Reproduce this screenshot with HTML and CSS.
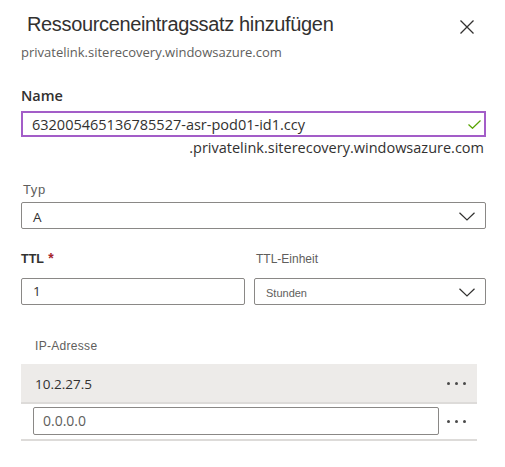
FILE: index.html
```html
<!DOCTYPE html>
<html lang="de">
<head>
<meta charset="utf-8">
<title>Ressourceneintragssatz hinzufügen</title>
<link rel="stylesheet" href="styles.css">
</head>
<body>
<div class="panel">
  <header class="head">
    <h1 class="title">Ressourceneintragssatz hinzufügen</h1>
    <button class="close" aria-label="Schließen">
      <svg width="14" height="14" viewBox="0 0 14 14"><path d="M0.5 0.5 L13.5 13.5 M13.5 0.5 L0.5 13.5" stroke="#323130" stroke-width="1.3" fill="none"/></svg>
    </button>
  </header>
  <div class="sub">privatelink.siterecovery.windowsazure.com</div>

  <div class="name-label">Name</div>
  <div class="name-input">
    <span class="name-value">632005465136785527-asr-pod01-id1.ccy</span>
    <svg class="check" width="13" height="9" viewBox="0 0 13 9"><path d="M0.5 4.5 L4.5 8.3 L12.5 0.5" stroke="#57a300" stroke-width="1.2" fill="none"/></svg>
  </div>
  <div class="suffix">.privatelink.siterecovery.windowsazure.com</div>

  <div class="light-label typ-label">Typ</div>
  <div class="select">
    <span class="select-value">A</span>
    <svg class="chev" width="16" height="9" viewBox="0 0 16 9"><path d="M0.5 0.8 L8 8 L15.5 0.8" stroke="#323130" stroke-width="1.2" fill="none"/></svg>
  </div>

  <div class="ttl-grid">
    <div class="ttl-label">TTL <span class="req">*</span></div>
    <div class="light-label unit-label">TTL-Einheit</div>
    <div class="ttl-input">1</div>
    <div class="select unit-select">
      <span class="unit-value">Stunden</span>
      <svg class="chev" width="16" height="9" viewBox="0 0 16 9"><path d="M0.5 0.8 L8 8 L15.5 0.8" stroke="#323130" stroke-width="1.2" fill="none"/></svg>
    </div>
  </div>

  <div class="ip-table">
    <div class="ip-head">IP-Adresse</div>
    <div class="ip-row filled">
      <span class="ip-value">10.2.27.5</span>
      <span class="more"><i></i><i></i><i></i></span>
    </div>
    <div class="ip-row edit">
      <div class="ip-input">0.0.0.0</div>
      <span class="more"><i></i><i></i><i></i></span>
    </div>
  </div>
</div>
</body>
</html>
```

FILE: styles.css
```css
* { box-sizing: border-box; }

body {
  margin: 0;
  background: #ffffff;
  font-family: "Open Sans", "Noto Sans", sans-serif;
  color: #323130;
}

.panel {
  width: 465px;
  margin-left: 21px;
}

.head {
  display: flex;
  justify-content: space-between;
  align-items: flex-start;
  padding-top: 13px;
}

.title {
  margin: 0 0 0 6px;
  font-family: "Liberation Sans", Arial, sans-serif;
  font-weight: 400;
  font-size: 20px;
  line-height: 23px;
  letter-spacing: -0.35px;
  color: #323130;
}

.close {
  margin: 7px 12px 0 0;
  padding: 0;
  border: 0;
  background: none;
  width: 14px;
  height: 14px;
  display: block;
}
.close svg { display: block; }

.sub {
  margin-top: 7px;
  font-size: 13px;
  line-height: 18px;
  color: #605e5c;
}

.name-label {
  margin-top: 25px;
  font-size: 14.5px;
  font-weight: 600;
  line-height: 20px;
  color: #323130;
}

.name-input {
  margin-top: 5px;
  height: 26px;
  border: 2px solid #a35dc8;
  display: flex;
  align-items: center;
  padding: 0 3px 0 9px;
}
.name-value {
  flex: 1;
  font-size: 14.5px;
  line-height: 22px;
  padding-top: 1px;
  color: #323130;
}
.check { display: block; margin-top: 1px; }

.suffix {
  margin-top: 1px;
  text-align: right;
  padding-right: 2px;
  font-size: 14.5px;
  line-height: 20px;
  color: #323130;
}

.light-label {
  font-family: "Liberation Sans", Arial, sans-serif;
  color: #605e5c;
}

.typ-label {
  margin-top: 24px;
  margin-left: 2px;
  font-size: 13px;
  line-height: 16px;
  letter-spacing: 0.6px;
}

.select {
  margin-top: 4px;
  height: 27px;
  border: 1px solid #8a8886;
  border-radius: 2px;
  display: flex;
  align-items: center;
  justify-content: space-between;
  padding: 0 10px 0 11px;
}
.select-value {
  font-size: 13.5px;
  line-height: 24px;
  padding-top: 2px;
}
.chev { display: block; margin-top: 1px; }

.ttl-grid {
  margin-top: 21px;
  display: grid;
  grid-template-columns: 224px 1fr;
  column-gap: 9px;
  row-gap: 11px;
  align-items: end;
}

.ttl-label {
  font-family: "Liberation Sans", Arial, sans-serif;
  font-weight: 700;
  font-size: 12.5px;
  line-height: 16px;
  color: #323130;
}
.req {
  color: #a4262c;
  font-size: 14px;
  margin-left: 1px;
}

.unit-label {
  font-size: 12px;
  line-height: 16px;
  padding-left: 2px;
}

.ttl-input {
  height: 27px;
  border: 1px solid #8a8886;
  border-radius: 2px;
  padding-left: 11px;
  font-size: 13.5px;
  line-height: 25px;
  color: #323130;
}

.unit-select { margin-top: 0; }
.unit-value {
  font-family: "Liberation Sans", Arial, sans-serif;
  font-size: 11px;
  color: #605e5c;
  padding-top: 2px;
}

.ip-table {
  width: 456px;
  margin-top: 33px;
}

.ip-head {
  padding-left: 14px;
  font-family: "Liberation Sans", Arial, sans-serif;
  font-size: 12px;
  line-height: 16px;
  letter-spacing: 0.3px;
  color: #605e5c;
}

.ip-row {
  display: flex;
  align-items: center;
  justify-content: space-between;
  border-bottom: 2px solid #dddbd9;
}
.ip-row.filled {
  margin-top: 10px;
  height: 40px;
  background: #edebe9;
  padding: 0 11px 0 14px;
}
.ip-value {
  font-size: 13.5px;
  line-height: 20px;
  padding-top: 1px;
}
.ip-row.edit {
  height: 37px;
  padding: 0 11px 1px 12px;
}
.ip-input {
  width: 406px;
  height: 28px;
  border: 1px solid #8a8886;
  border-radius: 2px;
  padding-left: 9px;
  font-size: 14px;
  line-height: 26px;
  color: #605e5c;
}

.more {
  display: flex;
  gap: 5px;
  align-items: center;
}
.more i {
  display: block;
  width: 3px;
  height: 3px;
  border-radius: 50%;
  background: #4a4a4a;
}
```
